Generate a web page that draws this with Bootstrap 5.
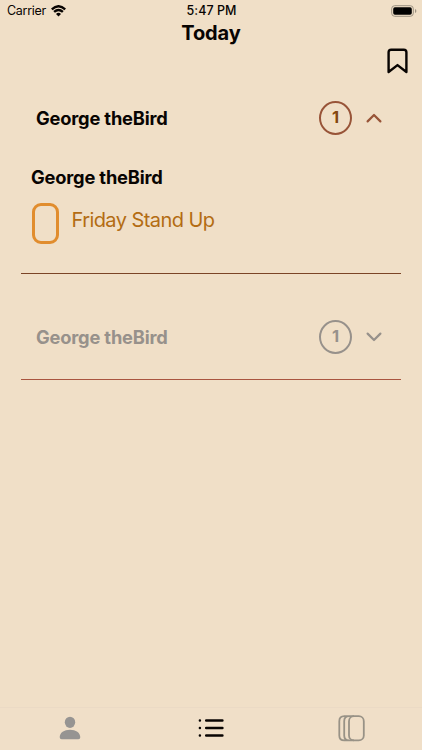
<!DOCTYPE html>
<html lang="en">
<head>
<meta charset="utf-8">
<meta name="viewport" content="width=device-width, initial-scale=1">
<title>Today</title>
<link href="https://cdn.jsdelivr.net/npm/bootstrap@5.3.0/dist/css/bootstrap.min.css" rel="stylesheet">
<style>
body{background:#f0dfc7;color:#080402;font-family:Inter,"Liberation Sans",sans-serif;height:750px;overflow:hidden}
svg{display:block;flex:none}
.status{height:21px;font-size:12.5px;line-height:21px}
.status .side{flex:1 1 0}
.carrier{padding-left:7px;gap:5px;letter-spacing:-.28px}
.clock{font-weight:500;letter-spacing:.05px;margin-right:2px}
.page-title{height:25px;line-height:25px;font-size:20px;font-weight:700;letter-spacing:-.1px}
.tools{height:39px;padding:2px 14px 0 0}
.tools button{height:26px}
main{padding:0 21px}
.group-head{height:65px;padding:0 19px 0 15px}
.name{font-size:18.3px;font-weight:650;letter-spacing:-.18px;line-height:24px}
.count{width:33px;height:34px;border:2px solid #985438;color:#85480f;font-size:16.5px;line-height:1;font-weight:700;margin-right:14px}
.first{height:189px;border-bottom:1px solid #7b4426}
.second{height:106px;padding-top:30px;border-bottom:1px solid #a9553f}
.muted-row{color:#97918b}
.muted-row .count{color:#97918b;border-color:#97918b}
.detail{padding:15px 10px 0}
.task{padding:14px 0 0 1px;gap:12.5px}
.tick{width:27px;height:41px;border:3px solid #e18d2e;border-radius:9px}
.task-name{font-size:20px;line-height:24px;color:#b36c13;letter-spacing:-.57px;margin-top:5px}
.tabs{height:43px;border-top:1px solid #ebdac5;background:#f0dfc8;padding:0 0 2px}
.tabs a{flex:1 1 0}
</style>
<script src="https://cdn.jsdelivr.net/npm/bootstrap@5.3.0/dist/js/bootstrap.bundle.min.js"></script>
</head>
<body class="d-flex flex-column">
<div class="status d-flex align-items-center">
  <div class="side carrier d-flex align-items-center"><span>Carrier</span>
    <svg width="15" height="12" viewBox="0 0 15 12" fill="none" stroke="#080402" stroke-width="2.4"><path d="M.8 4.3Q7.5-1.8 14.2 4.3M3.1 6.9Q7.5 2.9 11.9 6.9"/><path d="M5 9Q7.5 6.7 10 9L7.5 11.5Z" fill="#080402" stroke="none"/></svg>
  </div>
  <div class="clock">5:47 PM</div>
  <div class="side d-flex justify-content-end pe-1">
    <svg width="27" height="12" viewBox="0 0 27 12"><rect x=".7" y=".7" width="21.6" height="10.6" rx="3" fill="none" stroke="#9b9181"/><rect x="2.2" y="2.2" width="18.6" height="7.6" rx="1.7"/><path d="M24 4v4q1.4-.6 1.4-2T24 4" fill="#9b9181"/></svg>
  </div>
</div>
<h1 class="page-title text-center m-0">Today</h1>
<div class="tools d-flex justify-content-end">
  <button class="btn p-0 border-0" aria-label="Bookmarks"><svg width="21" height="26" viewBox="0 0 21 26" fill="none" stroke="#080402" stroke-width="2.4" stroke-linejoin="round"><path d="M1.6 24V4.3q0-2.6 2.6-2.6h12.6q2.6 0 2.6 2.6V24l-8.9-6.9Z"/></svg></button>
</div>
<main class="flex-grow-1">
  <section class="first">
    <div class="group-head d-flex align-items-center">
      <span class="name me-auto">George theBird</span>
      <span class="count rounded-circle d-flex align-items-center justify-content-center">1</span>
      <svg width="16" height="10" viewBox="0 0 16 10" fill="none" stroke="#985438" stroke-width="2.2" stroke-linecap="round" stroke-linejoin="round"><path d="M1.6 8.4 8 2l6.4 6.4"/></svg>
    </div>
    <div class="detail">
      <div class="name">George theBird</div>
      <div class="task d-flex align-items-start">
        <span class="tick flex-shrink-0"></span>
        <span class="task-name">Friday Stand Up</span>
      </div>
    </div>
  </section>
  <section class="second">
    <div class="group-head muted-row d-flex align-items-center">
      <span class="name me-auto">George theBird</span>
      <span class="count rounded-circle d-flex align-items-center justify-content-center">1</span>
      <svg width="16" height="10" viewBox="0 0 16 10" fill="none" stroke="#97918b" stroke-width="2.2" stroke-linecap="round" stroke-linejoin="round"><path d="M1.6 1.6 8 8l6.4-6.4"/></svg>
    </div>
  </section>
</main>
<nav class="tabs d-flex align-items-center">
  <a class="d-flex justify-content-center" href="#" aria-label="Profile"><svg width="22" height="24" viewBox="0 0 22 24" fill="#969492"><ellipse cx="11" cy="6.3" rx="5.2" ry="5.6"/><path d="M.7 21.3C.7 16.5 5.2 13.7 11 13.7s10.3 2.8 10.3 7.6q0 1.9-2 1.9H2.7q-2 0-2-1.9"/></svg></a>
  <a class="d-flex justify-content-center" href="#" aria-label="List"><svg width="26" height="20" viewBox="0 0 26 20" stroke="#080402" stroke-width="2.5" stroke-linecap="round"><path d="M8.2 2.4h16.2M8.2 9.9h16.2M8.2 17.4h16.2M1.9 2.4h.01M1.9 9.9h.01M1.9 17.4h.01"/></svg></a>
  <a class="d-flex justify-content-center" href="#" aria-label="Cards"><svg width="27" height="27" viewBox="0 0 27 27" fill="none" stroke="#989286" stroke-width="1.8"><rect x="11" y="1.2" width="14.8" height="24.2" rx="5"/><path d="M16 1.2H6.3q-5 0-5 5v14.2q0 5 5 5H16M11.2 1.2q-5 0-5 5v14.2q0 5 5 5"/></svg></a>
</nav>
</body>
</html>
